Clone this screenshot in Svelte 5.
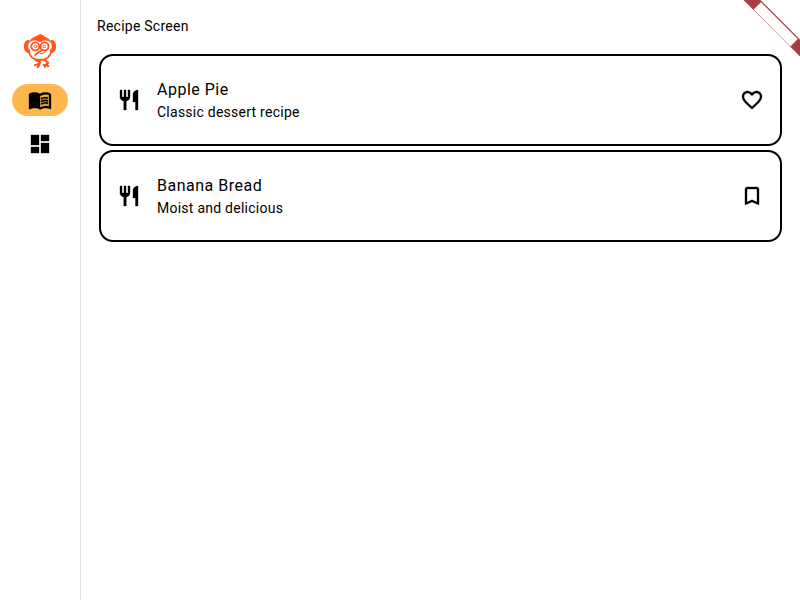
<script>
  const recipes = [
    { title: 'Apple Pie', subtitle: 'Classic dessert recipe', icon: 'heart' },
    { title: 'Banana Bread', subtitle: 'Moist and delicious', icon: 'bookmark' }
  ];
  const icons = {
    heart: 'M16.5 3c-1.74 0-3.41.81-4.5 2.09C10.91 3.81 9.24 3 7.5 3 4.42 3 2 5.42 2 8.5c0 3.78 3.4 6.86 8.55 11.54L12 21.35l1.45-1.32C18.6 15.36 22 12.28 22 8.5 22 5.42 19.58 3 16.5 3zm-4.4 15.55-.1.1-.1-.1C7.14 14.24 4 11.39 4 8.5 4 6.5 5.5 5 7.5 5c1.54 0 3.04.99 3.57 2.36h1.87C13.46 5.99 14.96 5 16.5 5c2 0 3.5 1.5 3.5 3.5 0 2.89-3.14 5.74-7.9 10.05z',
    bookmark: 'M17 3H7c-1.1 0-1.99.9-1.99 2L5 21l7-3 7 3V5c0-1.1-.9-2-2-2zm0 15-5-2.18L7 18V5h10v13z'
  };
  const dividers = [10.4, 20.8, 31.2, 41.6];
</script>

<div class="app">
  <nav>
    <svg class="logo" width="34" height="36" viewBox="0 0 34 36" fill="none" stroke="#ff5722" stroke-linecap="round" stroke-linejoin="round">
      <path d="M6.5 7.2C3 6.6.9 9.5.9 13.4s2 6.8 5 6.3C4.8 16 4.800 11 6.500 7.200zM27.500 7.200c3.500-.6 5.600 2.300 5.600 6.200s-2 6.800-5 6.300C29.200 16 29.200 11 27.500 7.200z" fill="#ff5722" stroke="none" />
      <path d="M5.500 10.500C7.200 5.600 11.500 3 17 3s9.800 2.600 11.500 7.500c-2-2.600-4.400-3.500-7-3.200-1.700.2-3.200.9-4.500 2-1.300-1.100-2.800-1.800-4.500-2-2.600-.3-5 .6-7 3.200z" fill="#ff5722" stroke="#ff5722" stroke-width=".5" />
      <path d="M12 4.500c1.500-1.800 3.800-3 6.700-3.700l-.5 1.300 2.800-.1-.8 1.200 2.300 1.700z" fill="#ff5722" stroke="none" />
      <path d="M5.700 16.500C6 23.300 10.500 27 17 27s11-3.700 11.300-10.500" stroke-width="2" />
      <circle cx="12.300" cy="13.400" r="4" fill="#fff" stroke-width="1.900" />
      <circle cx="21.500" cy="13.400" r="4" fill="#fff" stroke-width="1.900" />
      <circle cx="12.600" cy="13.400" r="1.400" stroke-width=".9" />
      <circle cx="21.200" cy="13.400" r="1.400" stroke-width=".9" />
      <path d="M19 16.800 12.300 21.700" stroke-width="2" />
      <path d="M17.200 20.500c2.500.2 4.600-.6 5.800-2" stroke-width="1" />
      <path d="m12.800 27.200 4.600 2.200-2.200 1.900-3.200.8m3.200-.8 1.200.8-1.700 2.100M21.200 26.800l4 2.900-1.900 1.800-2.600.5m2.600-.5 1.900 1.600m-1.900-1.600-1.400 2.300" stroke-width="2.100" />
    </svg>
    <div class="destination active">
      <svg class="icon" width="24" height="24" viewBox="0 0 24 24">
        <path d="M21 5c-1.11-.35-2.33-.5-3.5-.5-1.95 0-4.05.4-5.5 1.5-1.45-1.1-3.55-1.5-5.5-1.5S2.45 4.9 1 6v14.65c0 .25.25.5.5.5.1 0 .15-.05.25-.05C3.1 20.45 5.05 20 6.5 20c1.95 0 4.05.4 5.5 1.5 1.35-.85 3.8-1.5 5.5-1.5 1.65 0 3.35.3 4.75 1.05.1.05.15.05.25.05.25 0 .5-.25.5-.5V6c-.6-.45-1.25-.75-2-1zm0 13.5c-1.1-.35-2.3-.5-3.5-.5-1.7 0-4.15.65-5.5 1.5V8c1.35-.85 3.8-1.5 5.5-1.5 1.2 0 2.4.15 3.5.5v11.5z" />
        <path d="M17.5 10.5c.88 0 1.73.09 2.5.26V9.24c-.79-.15-1.64-.24-2.5-.24-1.7 0-3.24.29-4.5.83v1.66c1.13-.64 2.7-.99 4.5-.99zM13 12.49v1.66c1.13-.64 2.7-.99 4.5-.99.88 0 1.73.09 2.5.26V11.9c-.79-.15-1.64-.24-2.5-.24-1.7 0-3.24.3-4.5.83zm4.5 1.84c-1.7 0-3.24.29-4.5.83v1.66c1.13-.64 2.7-.99 4.5-.99.88 0 1.73.09 2.5.26v-1.52c-.79-.16-1.64-.24-2.5-.24z" />
      </svg>
    </div>
    <div class="destination">
      <svg class="icon" width="24" height="24" viewBox="0 0 24 24"><path d="M3 13h8V3H3v10zm0 8h8v-6H3v6zm10 0h8V11h-8v10zm0-18v6h8V3h-8z" /></svg>
    </div>
  </nav>
  <main>
    <h1>Recipe Screen</h1>
    {#each recipes as recipe}
      <article>
        <svg class="icon" width="24" height="24" viewBox="0 0 24 24"><path d="M11 9H9V2H7v7H5V2H3v7c0 2.12 1.66 3.84 3.75 3.97V22h2.5v-9.03C11.34 12.84 13 11.12 13 9V2h-2v7zm5-3v8h2.5v8H21V2c-2.76 0-5 2.24-5 4z" /></svg>
        <div class="text">
          <h2>{recipe.title}</h2>
          <p>{recipe.subtitle}</p>
        </div>
        <svg class="icon" width="24" height="24" viewBox="0 0 24 24"><path d={icons[recipe.icon]} /></svg>
      </article>
    {/each}
  </main>
  <svg class="ribbon" width="60" height="60" viewBox="0 0 60 60">
    <g transform="translate(60 0) rotate(45)">
      <rect x="-40" y="28" width="80" height="12" fill="#a43f42" />
      <rect x="-26" y="29.2" width="52" height="10.4" fill="#fff" />
      {#each dividers as d}
        <path d="M{d - 26} 29v10.6" stroke="#a43f42" stroke-opacity=".18" stroke-width=".5" />
      {/each}
    </g>
  </svg>
</div>

<style>
  .app { position: relative; display: flex; width: 800px; height: 600px; overflow: hidden; background: #fff; color: #000; font-family: Roboto, "Liberation Sans", sans-serif; }
  svg { display: block; flex: none; }
  .icon { stroke: #000; stroke-width: .35px; }
  nav { box-sizing: border-box; width: 81px; padding: 33px 0 0 12px; border-right: 1px solid #e0e0e0; flex: none; }
  .logo { margin: 0 0 15px 11px; }
  .destination { display: flex; align-items: center; justify-content: center; width: 56px; height: 32px; margin-bottom: 12px; border-radius: 16px; }
  .active { background: #ffb74d; }
  main { flex: 1; padding: 16px 18px 0 16px; }
  h1 { margin: 0 0 18px; font-size: 14px; line-height: 20px; font-weight: 400; letter-spacing: .25px; }
  article { display: flex; align-items: center; box-sizing: border-box; height: 92px; margin: 0 0 4px 2px; padding: 0 16px; border: 2px solid #000; border-radius: 14px; }
  .text { flex: 1; margin-left: 16px; }
  h2 { margin: 0; font-size: 16px; line-height: 24px; font-weight: 400; letter-spacing: .5px; }
  p { margin: 0; font-size: 14px; line-height: 20px; letter-spacing: .25px; }
  .ribbon { position: absolute; top: 0; right: 0; }
</style>
